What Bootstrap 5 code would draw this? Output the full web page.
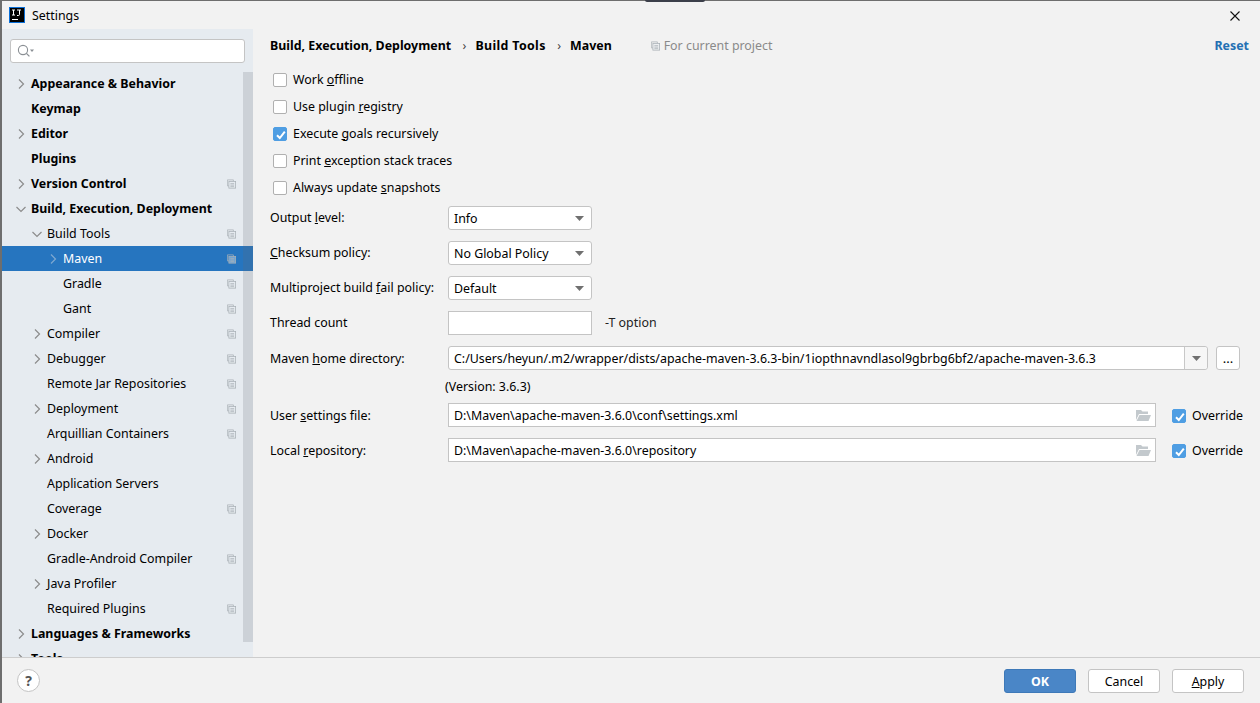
<!DOCTYPE html>
<html lang="en">
<head>
<meta charset="utf-8">
<title>Settings</title>
<link href="https://cdn.jsdelivr.net/npm/bootstrap@5.3.0/dist/css/bootstrap.min.css" rel="stylesheet">
<style>
html,body{height:100%;overflow:hidden}
body{font-family:"Noto Sans","Open Sans",sans-serif;font-size:12.4px;line-height:18px;color:#000;background:#f2f2f2}
.win{height:703px;border-top:1px solid #6e6e6e;border-left:2px solid #6e6e6e;position:relative}
.topnub{position:absolute;top:-1px;left:643px;width:60px;height:2px;background:#3c3f4a;border-radius:0 0 3px 3px}
.titlebar{height:28px;padding-left:7px}
.ttl{padding-top:2px}
.ijlogo{width:16px;height:16px;margin-right:7px;flex:none}
.closex{margin-right:20px;margin-top:2px}
.bodyrow{height:628px}
.side{width:251px;background:#e6ebf0;position:relative;overflow:hidden;flex:none}
.searchbox{margin:10px 8px 8px;height:24px;background:#fff;border:1px solid #c4c4c4;border-radius:3px;padding-left:6px}
.treerow{height:25px;padding-right:17px}
.treerow.sel{background:#2675bf;color:#fff}
.bold{font-weight:700}
.caret{width:12px;height:12px;flex:none;margin-right:4px}
.lv0{padding-left:13px}.lv1{padding-left:29px}.lv2{padding-left:45px}
.copyi{margin-left:auto;flex:none}
.sbar{position:absolute;right:0;top:43px;width:10px;height:570px;background:rgba(100,105,115,.2)}
.mainp{padding:5px 11px 0 17px;min-width:0}
.crumbs{height:23px}
.sep{color:#444;margin:0 9px 0 11.5px;font-weight:400}
.wider{letter-spacing:.35px}
.scopeicon{margin-left:39px}
.scope{color:#8a8a8a}
.resetl{color:#2470b3;font-weight:700;text-decoration:none;margin-left:auto}
.chkrow{height:27px;padding-left:3px}
.chks{margin-top:9px;margin-bottom:5px}
.fbox{width:14px;height:14px;flex:none;border:1px solid #b0b0b0;border-radius:2px;background:#fff;margin:0 6px 0 0;appearance:none;display:block}
.fbox:checked{background-color:#4f9ee3;border-color:#4f9ee3;background-image:url("data:image/svg+xml,%3Csvg xmlns='http://www.w3.org/2000/svg' viewBox='0 0 14 14'%3E%3Cpath d='M3 7.200 5.800 10 10.800 3.600' fill='none' stroke='%23fff' stroke-width='2'/%3E%3C/svg%3E");background-size:14px 14px}
.frow{height:24px;margin-bottom:11px}
.flabel{width:178px;flex:none}
.lowrow .flabel,.lowrow .ovr,.vers{padding-top:2px}
.ctl{height:24px;border:1px solid #c4c4c4;background:#fff;font-size:12.4px;color:#000;padding:0 5px;outline:none;border-radius:0;box-shadow:none;line-height:22px}
.ctl:focus{border-color:#c4c4c4;box-shadow:none}
.w144{width:144px;flex:none}
.rnd{border-radius:3px}
select.ctl{appearance:none;padding:1px 5px 0;background-image:url("data:image/svg+xml,%3Csvg xmlns='http://www.w3.org/2000/svg' width='9' height='5'%3E%3Cpath d='M0 0h9L4.500 5z' fill='%23707070'/%3E%3C/svg%3E");background-repeat:no-repeat;background-position:right 7px center;background-size:9px 5px}
.topt{margin-left:13px;color:#222}
.combo{width:760px;flex:none;height:24px;border:1px solid #c4c4c4;border-radius:3px;background:#fff}
.combo input{border:0;outline:0;flex:1;min-width:0;padding:2px 5px 0;font:inherit;background:transparent}
.comboarrow{width:23px;height:22px;border-left:1px solid #c8c8c8;background:#f6f6f6;border-radius:0 3px 3px 0}
.dotsbtn{width:24px;height:24px;margin-left:8px;border:1px solid #c4c4c4;border-radius:3px;background:#fff;padding:0;line-height:18px;font-size:13px}
.vers{height:24px;margin:-7px 0 5px 175px}
.pathbox{width:708px;flex:none;height:24px;border:1px solid #c4c4c4;background:#fff}
.pathbox input{border:0;outline:0;flex:1;min-width:0;padding:1px 5px 0;font:inherit;background:transparent}
.ovr{margin-left:16px}
.footer{height:46px;border-top:1px solid #cdcdcd;padding:11px 16px 0 15px}
.helpb{width:23px;height:23px;border-radius:50%;border:1px solid #c4c4c4;background:#fff;padding:0;font-size:14px;line-height:20px;color:#555;font-weight:700}
.dbtn{width:72px;height:24px;padding:2px 0 0;font-size:12.4px;line-height:20px;border-radius:3px;margin-left:12px;background:#fff;border:1px solid #c4c4c4;color:#000}
.dbtn.okb{background:#4a86c7;border-color:#3e79b8;color:#fff;font-weight:700;margin-left:0}
</style>
</head>
<body>
<div class="win d-flex flex-column">
  <div class="topnub"></div>
  <div class="titlebar d-flex align-items-center">
    <svg class="ijlogo" viewBox="0 0 16 16"><rect width="16" height="16" fill="#0a6fd8"/><rect x="1" y="1" width="14" height="14" fill="#000"/><path d="M3 3h3M4.500 3v5M3 8h3M8 3h4M10.500 3v4.500q0 1-1.200 1H8" fill="none" stroke="#fff" stroke-width="1"/><rect x="3" y="12" width="6" height="1" fill="#fff"/></svg>
    <span class="ttl">Settings</span>
    <svg class="closex ms-auto" width="10" height="10" viewBox="0 0 10 10"><path d="M.5.5l9 9M9.500.5l-9 9" stroke="#111" stroke-width="1.100"/></svg>
  </div>
  <div class="bodyrow d-flex">
    <div class="side">
      <div class="searchbox d-flex align-items-center">
        <svg width="18" height="14" viewBox="0 0 18 14"><circle cx="6" cy="6" r="4.600" fill="none" stroke="#8a8f94" stroke-width="1.100"/><path d="M9.400 9.400l3 3" stroke="#8a8f94" stroke-width="1.300"/><path d="M13 5.500h4l-2 2.500z" fill="#8a8f94"/></svg>
      </div>
      <div id="tree"></div>
      <div class="sbar"></div>
    </div>
    <div class="mainp flex-grow-1">
      <div class="crumbs d-flex align-items-center bold">
        <span>Build, Execution, Deployment</span><span class="sep">›</span><span class="wider">Build Tools</span><span class="sep">›</span><span>Maven</span>
        <svg class="scopeicon" width="9" height="10" viewBox="0 0 12 12"><use href="#copyg"/></svg>
        <span class="scope ms-1 fw-normal">For current project</span>
        <a href="#" class="resetl">Reset</a>
      </div>
      <div class="chks">
        <label class="chkrow d-flex align-items-center"><input type="checkbox" class="fbox"><span>Work <u>o</u>ffline</span></label>
        <label class="chkrow d-flex align-items-center"><input type="checkbox" class="fbox"><span>Use plugin <u>r</u>egistry</span></label>
        <label class="chkrow d-flex align-items-center"><input type="checkbox" class="fbox" checked><span>Execute <u>g</u>oals recursively</span></label>
        <label class="chkrow d-flex align-items-center"><input type="checkbox" class="fbox"><span>Print <u>e</u>xception stack traces</span></label>
        <label class="chkrow d-flex align-items-center"><input type="checkbox" class="fbox"><span>Always update <u>s</u>napshots</span></label>
      </div>
      <div class="frow d-flex align-items-center"><span class="flabel">Output <u>l</u>evel:</span><select class="ctl rnd w144"><option>Info</option></select></div>
      <div class="frow d-flex align-items-center"><span class="flabel"><u>C</u>hecksum policy:</span><select class="ctl rnd w144"><option>No Global Policy</option></select></div>
      <div class="frow d-flex align-items-center"><span class="flabel">Multiproject build <u>f</u>ail policy:</span><select class="ctl rnd w144"><option>Default</option></select></div>
      <div class="frow d-flex align-items-center"><span class="flabel">Thread count</span><input class="ctl w144" type="text"><span class="topt">-T option</span></div>
      <div class="frow lowrow d-flex align-items-center"><span class="flabel">Maven <u>h</u>ome directory:</span>
        <div class="combo d-flex align-items-center"><input type="text" value="C:/Users/heyun/.m2/wrapper/dists/apache-maven-3.6.3-bin/1iopthnavndlasol9gbrbg6bf2/apache-maven-3.6.3"><div class="comboarrow d-flex align-items-center justify-content-center"><svg width="9" height="5"><path d="M0 0h9L4.500 5z" fill="#707070"/></svg></div></div>
        <button class="dotsbtn" type="button">...</button>
      </div>
      <div class="vers d-flex align-items-center">(Version: 3.6.3)</div>
      <div class="frow lowrow d-flex align-items-center"><span class="flabel">User <u>s</u>ettings file:</span>
        <div class="pathbox d-flex align-items-center"><input type="text" value="D:\Maven\apache-maven-3.6.0\conf\settings.xml"><svg class="me-1" width="16" height="14" viewBox="0 0 16 14"><use href="#folderg"/></svg></div>
        <label class="ovr d-flex align-items-center"><input type="checkbox" class="fbox" checked><span>Override</span></label>
      </div>
      <div class="frow lowrow d-flex align-items-center"><span class="flabel">Local <u>r</u>epository:</span>
        <div class="pathbox d-flex align-items-center"><input type="text" value="D:\Maven\apache-maven-3.6.0\repository"><svg class="me-1" width="16" height="14" viewBox="0 0 16 14"><use href="#folderg"/></svg></div>
        <label class="ovr d-flex align-items-center"><input type="checkbox" class="fbox" checked><span>Override</span></label>
      </div>
    </div>
  </div>
  <div class="footer d-flex align-items-start">
    <button class="helpb" type="button">?</button>
    <button class="dbtn okb ms-auto" type="button">OK</button>
    <button class="dbtn" type="button">Cancel</button>
    <button class="dbtn" type="button"><u>A</u>pply</button>
  </div>
</div>
<svg width="0" height="0" class="position-absolute">
  <defs>
    <g id="copyg" fill="none" stroke="#a9b0b6" stroke-width="1"><path d="M8.500 2.500V.5H.5v8h2"/><rect x="2.500" y="2.500" width="9" height="9" fill="#e6ebf0" fill-opacity=".4"/><path d="M4.500 5.500h5M4.500 7.500h5M4.500 9.500h5"/></g>
    <g id="folderg"><path d="M1 2h5l1.500 1.500H13V6H4L1 12z" fill="#c3c9cd"/><path d="M4.500 7H16l-2.500 6H1.500z" fill="#c3c9cd"/></g>
  </defs>
</svg>
<script>
const items=[["Appearance & Behavior",0,1,'r',0],["Keymap",0,1,'',0],["Editor",0,1,'r',0],["Plugins",0,1,'',0],["Version Control",0,1,'r',1],["Build, Execution, Deployment",0,1,'d',0],["Build Tools",1,0,'d',1],["Maven",2,0,'r',1,1],["Gradle",2,0,'',1],["Gant",2,0,'',1],["Compiler",1,0,'r',1],["Debugger",1,0,'r',1],["Remote Jar Repositories",1,0,'',1],["Deployment",1,0,'r',1],["Arquillian Containers",1,0,'',1],["Android",1,0,'r',0],["Application Servers",1,0,'',0],["Coverage",1,0,'',1],["Docker",1,0,'r',0],["Gradle-Android Compiler",1,0,'',1],["Java Profiler",1,0,'r',0],["Required Plugins",1,0,'',1],["Languages & Frameworks",0,1,'r',0],["Tools",0,1,'r',0]];
const esc=s=>s.replace(/&/g,'&amp;');
document.getElementById('tree').innerHTML=items.map(i=>{
 const c=i[3]==='r'?'<path d="M4 1.500 8.500 6 4 10.500" fill="none" stroke="'+(i[5]?'#7fa8d0':'#8c8c8c')+'" stroke-width="1.200"/>':i[3]==='d'?'<path d="M1.500 4 6 8.500 10.500 4" fill="none" stroke="#8c8c8c" stroke-width="1.200"/>':'';
 return '<div class="treerow d-flex align-items-center lv'+i[1]+(i[5]?' sel':'')+(i[2]?' bold':'')+'"><svg class="caret" viewBox="0 0 12 12">'+c+'</svg><span>'+esc(i[0])+'</span>'+(i[4]?'<svg class="copyi" width="9" height="10" viewBox="0 0 12 12"><use href="#copyg"/></svg>':'')+'</div>';
}).join('');
</script>
<script src="https://cdn.jsdelivr.net/npm/bootstrap@5.3.0/dist/js/bootstrap.bundle.min.js"></script>
</body>
</html>
